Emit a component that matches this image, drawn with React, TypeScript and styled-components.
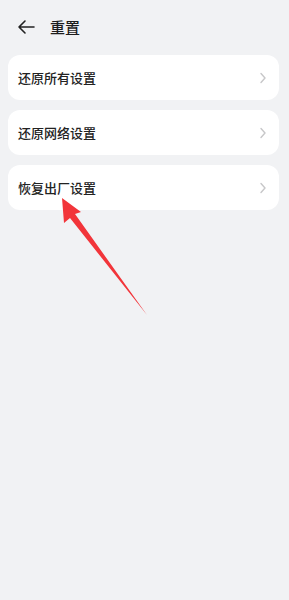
import React from "react"
import styled, { createGlobalStyle } from "styled-components"

const GlobalStyle = createGlobalStyle`
  html, body {
    margin: 0;
    padding: 0;
    background: #f1f2f4;
  }
  body {
    font-family: "Noto Sans CJK SC", "Noto Sans", sans-serif;
  }
`

const Page = styled.div`
  position: relative;
  width: 289px;
  height: 600px;
  background: #f1f2f4;
  overflow: hidden;
`

const Header = styled.div`
  display: flex;
  align-items: center;
  height: 53px;
  padding: 0 0 0 16px;
  gap: 14px;
`

const BackButton = styled.div`
  display: flex;
  align-items: center;
  width: 20px;
  height: 20px;
  color: #222;
`

const Title = styled.div`
  font-size: 15px;
  font-weight: 500;
  color: #1d1d1d;
`

const List = styled.div`
  display: flex;
  flex-direction: column;
  gap: 10px;
  padding: 2px 10px 0 8px;
`

const Row = styled.div`
  display: flex;
  align-items: center;
  justify-content: space-between;
  height: 45px;
  padding: 0 12px 0 10px;
  background: #ffffff;
  border-radius: 12px;
`

const Label = styled.span`
  font-size: 13px;
  font-weight: 500;
  color: #222;
`

const Chevron = styled.svg`
  width: 8px;
  height: 12px;
  color: #c7c7c9;
`

const Pointer = styled.svg`
  position: absolute;
  left: 0;
  top: 0;
  pointer-events: none;
`

const items = ["还原所有设置", "还原网络设置", "恢复出厂设置"]

export default function App() {
  return (
    <>
      <GlobalStyle />
      <Page>
        <Header>
          <BackButton>
            <svg width="20" height="20" viewBox="0 0 20 20" fill="none" stroke="currentColor" strokeWidth="1.6" strokeLinecap="round" strokeLinejoin="round">
              <path d="M18 10H3M9 4l-6 6 6 6" />
            </svg>
          </BackButton>
          <Title>重置</Title>
        </Header>
        <List>
          {items.map((item) => (
            <Row key={item}>
              <Label>{item}</Label>
              <Chevron viewBox="0 0 8 12" fill="none" stroke="currentColor" strokeWidth="1.4" strokeLinecap="round" strokeLinejoin="round">
                <path d="M2 1.5l4 4.5-4 4.5" />
              </Chevron>
            </Row>
          ))}
        </List>
        <Pointer width="289" height="600" viewBox="0 0 289 600">
          <polygon points="62,198 81,212 75,214 147,315 70,218 64,223" fill="#f2353a" />
        </Pointer>
      </Page>
    </>
  )
}
